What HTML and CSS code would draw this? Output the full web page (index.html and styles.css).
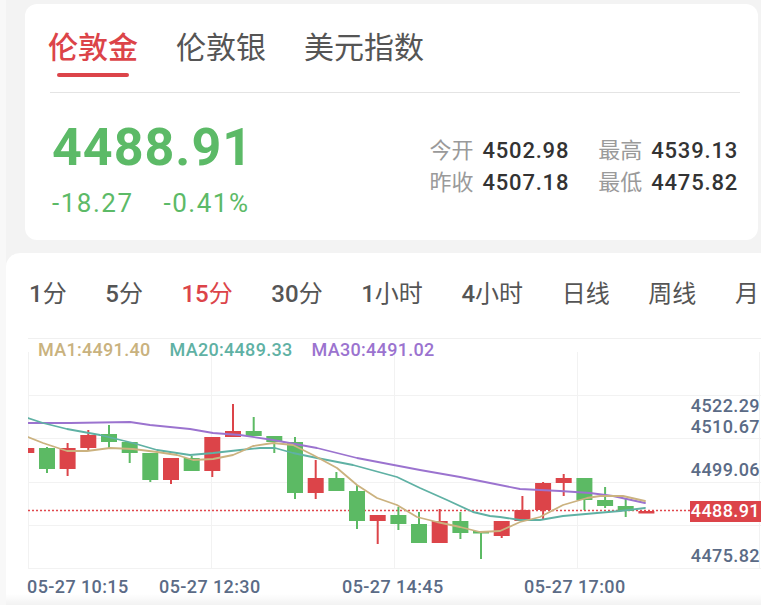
FILE: index.html
```html
<!DOCTYPE html>
<html lang="zh-CN">
<head>
<meta charset="utf-8">
<title>伦敦金行情</title>
<link rel="stylesheet" href="styles.css">
</head>
<body>
<div class="page">
  <section class="quote-card">
    <nav class="market-tabs">
      <div class="market-tab active"><span>伦敦金</span><i class="tab-bar"></i></div>
      <div class="market-tab"><span>伦敦银</span></div>
      <div class="market-tab"><span>美元指数</span></div>
    </nav>
    <div class="divider"></div>
    <div class="quote-body">
      <div class="price-block">
        <div class="price">4488.91</div>
        <div class="change"><span>-18.27</span><span>-0.41%</span></div>
      </div>
      <div class="stats">
        <div class="stat"><span class="label">今开</span><span class="value">4502.98</span></div>
        <div class="stat"><span class="label">最高</span><span class="value">4539.13</span></div>
        <div class="stat"><span class="label">昨收</span><span class="value">4507.18</span></div>
        <div class="stat"><span class="label">最低</span><span class="value">4475.82</span></div>
      </div>
    </div>
  </section>

  <section class="chart-card">
    <nav class="period-tabs">
      <span><b>1</b>分</span>
      <span><b>5</b>分</span>
      <span class="active"><b>15</b>分</span>
      <span><b>30</b>分</span>
      <span><b>1</b>小时</span>
      <span><b>4</b>小时</span>
      <span>日线</span>
      <span>周线</span>
      <span>月</span>
    </nav>
    <div class="chart-divider"></div>
    <div class="chart-wrap">
      <div class="ma-legend">
        <span class="ma1">MA1:4491.40</span>
        <span class="ma20">MA20:4489.33</span>
        <span class="ma30">MA30:4491.02</span>
      </div>
      <svg class="kline" width="755" height="266" viewBox="6 339 755 266" xmlns="http://www.w3.org/2000/svg">
        <defs>
          <clipPath id="plot"><rect x="28" y="340" width="733" height="240"/></clipPath>
        </defs>
        <g class="grid">
          <line x1="28" y1="395.5" x2="761" y2="395.5"/>
          <line x1="28" y1="438.5" x2="761" y2="438.5"/>
          <line x1="28" y1="482.5" x2="761" y2="482.5"/>
          <line x1="28" y1="525.5" x2="761" y2="525.5"/>
          <line x1="28" y1="568.5" x2="761" y2="568.5"/>
          <line x1="28.5" y1="352" x2="28.5" y2="568"/>
          <line x1="211.5" y1="352" x2="211.5" y2="568"/>
          <line x1="394.5" y1="352" x2="394.5" y2="568"/>
          <line x1="577.5" y1="352" x2="577.5" y2="568"/>
          <line x1="759.5" y1="352" x2="759.5" y2="568"/>
        </g>
        <line class="last-line" x1="28" y1="510.5" x2="690" y2="510.5"/>
        <g clip-path="url(#plot)">
          <g class="up">
            <line x1="67.6" y1="443" x2="67.6" y2="476"/><rect x="59.6" y="448" width="16" height="21"/>
            <line x1="88.3" y1="430" x2="88.3" y2="450"/><rect x="80.3" y="435" width="16" height="13"/>
            <line x1="171" y1="458" x2="171" y2="484"/><rect x="163" y="458" width="16" height="22"/>
            <line x1="212.3" y1="437" x2="212.3" y2="477"/><rect x="204.3" y="437" width="16" height="34"/>
            <line x1="233" y1="404" x2="233" y2="437"/><rect x="225" y="431" width="16" height="6"/>
            <line x1="315.7" y1="460" x2="315.7" y2="499"/><rect x="307.7" y="478" width="16" height="15"/>
            <line x1="377.7" y1="515" x2="377.7" y2="544"/><rect x="369.7" y="515" width="16" height="6"/>
            <line x1="439.7" y1="509" x2="439.7" y2="543"/><rect x="431.7" y="521" width="16" height="22"/>
            <line x1="501.7" y1="521" x2="501.7" y2="538"/><rect x="493.7" y="521" width="16" height="15"/>
            <line x1="522.4" y1="496" x2="522.4" y2="521"/><rect x="514.4" y="510" width="16" height="11"/>
            <line x1="543.1" y1="482" x2="543.1" y2="520"/><rect x="535.1" y="483" width="16" height="27"/>
            <line x1="563.7" y1="474" x2="563.7" y2="496"/><rect x="555.7" y="478" width="16" height="5"/>
            <rect x="18.3" y="448" width="16" height="5"/>
            <rect x="638.4" y="511" width="16" height="2.5"/>
          </g>
          <g class="down">
            <line x1="47" y1="447" x2="47" y2="473"/><rect x="39" y="448" width="16" height="21"/>
            <line x1="109" y1="425" x2="109" y2="448"/><rect x="101" y="434" width="16" height="8"/>
            <line x1="129.7" y1="442" x2="129.7" y2="463"/><rect x="121.7" y="442" width="16" height="11"/>
            <line x1="150.3" y1="453" x2="150.3" y2="482"/><rect x="142.3" y="453" width="16" height="27"/>
            <line x1="191.7" y1="456" x2="191.7" y2="471"/><rect x="183.7" y="458" width="16" height="13"/>
            <line x1="253.7" y1="417" x2="253.7" y2="436"/><rect x="245.7" y="431" width="16" height="5"/>
            <line x1="274.3" y1="436" x2="274.3" y2="453"/><rect x="266.3" y="436" width="16" height="6"/>
            <line x1="295" y1="437" x2="295" y2="499"/><rect x="287" y="442" width="16" height="51"/>
            <line x1="336.4" y1="472" x2="336.4" y2="491"/><rect x="328.4" y="478" width="16" height="13"/>
            <line x1="357" y1="485" x2="357" y2="529"/><rect x="349" y="491" width="16" height="30"/>
            <line x1="398.4" y1="507" x2="398.4" y2="530"/><rect x="390.4" y="515" width="16" height="9"/>
            <line x1="419" y1="512" x2="419" y2="543"/><rect x="411" y="524" width="16" height="19"/>
            <line x1="460.4" y1="512" x2="460.4" y2="539"/><rect x="452.4" y="521" width="16" height="12"/>
            <line x1="481" y1="531" x2="481" y2="559"/><rect x="473" y="531" width="16" height="2.5"/>
            <line x1="584.4" y1="478" x2="584.4" y2="510"/><rect x="576.4" y="478" width="16" height="22"/>
            <line x1="605.1" y1="487" x2="605.1" y2="508"/><rect x="597.1" y="500" width="16" height="6"/>
            <line x1="625.7" y1="498" x2="625.7" y2="517"/><rect x="617.7" y="506" width="16" height="5"/>
          </g>
          <polyline class="ma30-line" points="28,423 70,423 130,422 150,425 190,429 213,433 240,435 273,440 317,448 357,458 420,470 460,477 490,483 520,489 560,491 590,493 613,496 645,503"/>
          <polyline class="ma20-line" points="28,418 43,423 67,429 100,435 133,443 157,450 190,455 213,453 240,450 260,448 275,448 293,453 317,458 353,465 397,477 420,488 447,500 473,512 490,516 500,517 520,520 540,520 563,516 597,513 620,511 645,508"/>
          <polyline class="ma1-line" points="28,437 43,443 67,451 87,451 110,448 133,449 157,452 177,455 193,460 213,459 233,455 240,452 253,446 273,443 293,445 313,455 337,468 357,485 377,498 397,505 417,517 437,522 460,527 480,532 500,531 520,522 540,517 563,505 587,498 600,496 623,496 645,501"/>
        </g>
        <g class="axis-label y-axis">
          <text x="760" y="412">4522.29</text>
          <text x="760" y="433">4510.67</text>
          <text x="760" y="476">4499.06</text>
          <text x="760" y="562">4475.82</text>
        </g>
        <rect class="last-box" x="690" y="501" width="71" height="21"/>
        <text class="last-text" x="760" y="517">4488.91</text>
        <g class="axis-label x-axis">
          <text x="27" y="593">05-27 10:15</text>
          <text x="159" y="593">05-27 12:30</text>
          <text x="342" y="593">05-27 14:45</text>
          <text x="524" y="593">05-27 17:00</text>
        </g>
      </svg>
    </div>
  </section>
</div>
</body>
</html>
```

FILE: styles.css
```css
html, body {
  margin: 0;
  padding: 0;
}

body {
  width: 761px;
  height: 605px;
  overflow: hidden;
  background: linear-gradient(to right, #f8f8f8 6px, #f3f3f3 6px);
  font-family: Roboto, "Noto Sans CJK SC", sans-serif;
  color: #333;
}

.page {
  padding-top: 4px;
}

/* ---------- quote card ---------- */
.quote-card {
  margin: 0 3px 0 25px;
  background: #fff;
  border-radius: 12px;
}

.market-tabs {
  display: flex;
  align-items: flex-start;
  gap: 38px;
  padding: 24px 0 0 23px;
}

.market-tab {
  display: flex;
  flex-direction: column;
  align-items: center;
  font-size: 30px;
  line-height: 40px;
  color: #555;
}

.market-tab.active {
  color: #dc4449;
  font-weight: 500;
}

.tab-bar {
  display: block;
  width: 72px;
  height: 4px;
  margin-top: 5px;
  border-radius: 2px;
  background: #dc4449;
}

.market-tabs .market-tab:not(.active) {
  padding-bottom: 9px;
}

.divider {
  height: 1px;
  margin: 15px 18px 0 25px;
  background: #e4e4e4;
}

.quote-body {
  display: flex;
  justify-content: space-between;
  align-items: center;
  margin-top: 25px;
  padding: 0 20px 22px 27px;
}

.price {
  font-size: 52px;
  line-height: 60px;
  font-weight: 700;
  letter-spacing: 1px;
  color: #5cba67;
}

.change {
  display: flex;
  gap: 30px;
  margin-top: 10px;
  font-size: 26px;
  line-height: 30px;
  letter-spacing: 1.5px;
  color: #5cba67;
}

.stats {
  display: grid;
  grid-template-columns: auto auto;
  column-gap: 29px;
  margin-top: -3px;
}

.stat {
  display: flex;
  gap: 9px;
  font-size: 22px;
  line-height: 32px;
}

.stat .label {
  color: #9a9a9a;
}

.stat .value {
  color: #333;
  font-weight: 500;
  letter-spacing: 0.8px;
}

/* ---------- chart card ---------- */
.chart-card {
  position: relative;
  margin: 13px 0 0 6px;
  width: 775px;
  height: 352px;
  background: #fff;
  border-radius: 14px 14px 0 0;
  overflow: hidden;
}

.chart-card::after {
  content: "";
  position: absolute;
  left: 0;
  right: 0;
  bottom: 0;
  height: 11px;
  background: linear-gradient(to bottom, rgba(0, 0, 0, 0), rgba(0, 0, 0, 0.05));
}

.period-tabs {
  display: flex;
  gap: 38.6px;
  padding: 25px 0 0 23px;
  font-size: 24px;
  line-height: 32px;
  color: #555;
  white-space: nowrap;
}

.period-tabs b {
  font-weight: 500;
}

.period-tabs .active {
  color: #dc4449;
}

.chart-divider {
  height: 1px;
  margin: 28px 0 0 22px;
  background: #f0f0f0;
}

.chart-wrap {
  position: relative;
  height: 266px;
}

.ma-legend {
  position: absolute;
  top: 1px;
  left: 32px;
  display: flex;
  gap: 19px;
  font-size: 18px;
  line-height: 20px;
  font-weight: 500;
  letter-spacing: 0.3px;
}

.ma1 { color: #c9b27e; }
.ma20 { color: #5fb1a4; }
.ma30 { color: #9b73cf; }

.kline {
  display: block;
}

.grid line {
  stroke: #f2f2f2;
  stroke-width: 1;
}

.last-line {
  stroke: #e0474c;
  stroke-width: 1.5;
  stroke-dasharray: 2 2;
}

.up rect { fill: #dc4449; }
.up line { stroke: #dc4449; stroke-width: 2; }
.down rect { fill: #5cba64; }
.down line { stroke: #5cba64; stroke-width: 2; }

.ma1-line, .ma20-line, .ma30-line {
  fill: none;
  stroke-width: 1.8;
  stroke-linejoin: round;
  stroke-linecap: round;
}

.ma1-line { stroke: #cbb27f; }
.ma20-line { stroke: #5fb1a4; }
.ma30-line { stroke: #9b73cf; }

.axis-label text {
  font-family: Roboto, sans-serif;
  font-size: 18px;
  font-weight: 500;
  letter-spacing: 0.4px;
  fill: #5b6b86;
}

.y-axis text,
.last-text {
  text-anchor: end;
}

.last-box {
  fill: #dc4449;
}

.last-text {
  font-family: Roboto, sans-serif;
  font-size: 18px;
  font-weight: 500;
  letter-spacing: 0.4px;
  fill: #fff;
}
```
